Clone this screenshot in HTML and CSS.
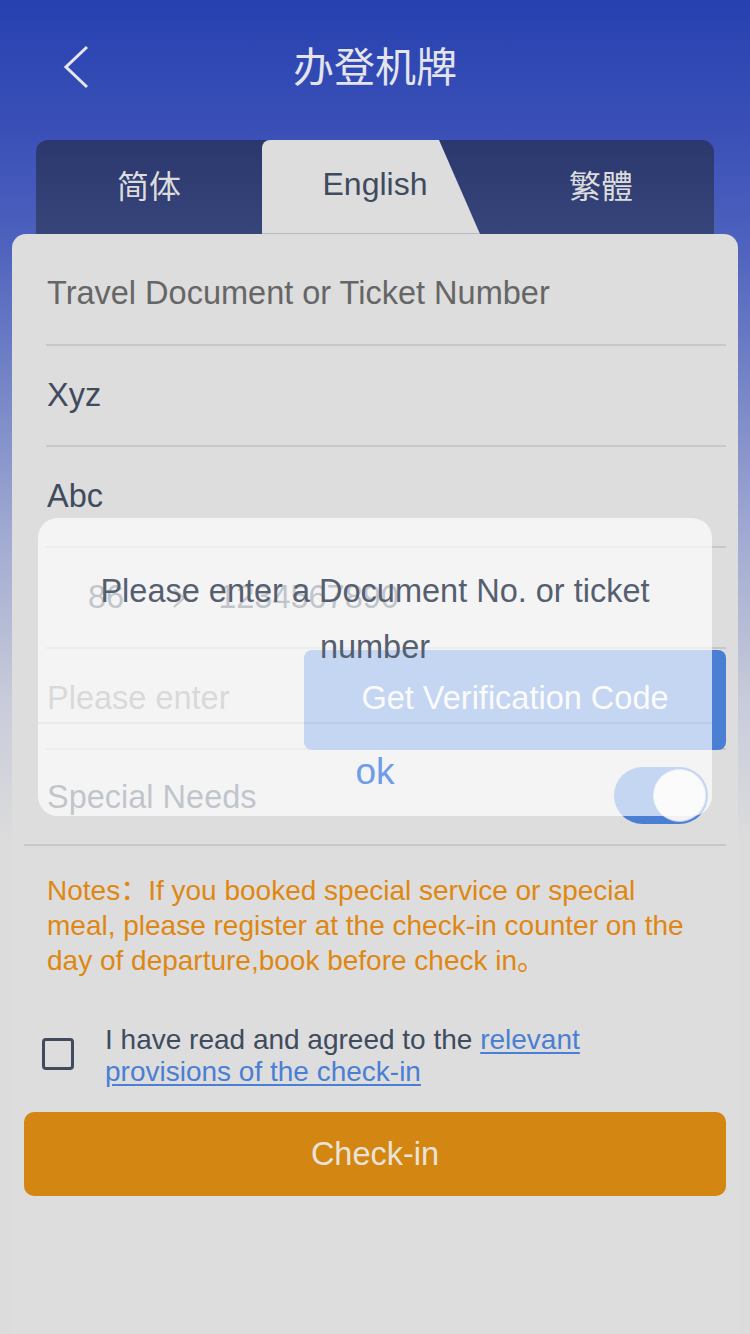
FILE: index.html
```html
<!DOCTYPE html>
<html lang="zh-CN">
<head>
<meta charset="utf-8">
<title>办登机牌</title>
<link rel="stylesheet" href="styles.css">
</head>
<body>
<div class="page">
  <header class="nav">
    <span class="back">
      <svg width="28" height="44" viewBox="0 0 28 44"><polyline points="23,2 2,22 23,42" fill="none" stroke="#e6e6ec" stroke-width="3"/></svg>
    </span>
    <h1 class="title">办登机牌</h1>
    <span></span>
  </header>

  <nav class="tabs">
    <div class="tab cjk">简体</div>
    <div class="tab active">English</div>
    <div class="tab cjk">繁體</div>
  </nav>

  <section class="card">
    <div class="row title-row">Travel Document or Ticket Number</div>
    <div class="row">Xyz</div>
    <div class="row">Abc</div>
    <div class="row phone">
      <span class="code">86</span>
      <svg class="arrow" width="14" height="22" viewBox="0 0 14 22"><polyline points="2,2 12,11 2,20" fill="none" stroke="#404b5d" stroke-width="2"/></svg>
      <span class="num">1234567890</span>
    </div>
    <div class="row verify">
      <span class="ph">Please enter</span>
      <button class="code-btn">Get Verification Code</button>
    </div>
    <div class="row special">
      <span class="label">Special Needs</span>
      <span class="toggle"><span class="knob"></span></span>
    </div>

    <p class="notes">Notes<span class="cjk glyph">：</span>If you booked special service or special meal, please register at the check-in counter on the day of departure,book before check in<span class="cjk glyph">。</span></p>

    <div class="agree">
      <span class="checkbox"></span>
      <p class="agree-text">I have read and agreed to the <a href="#" class="link">relevant provisions of the check-in</a></p>
    </div>

    <button class="checkin">Check-in</button>
  </section>

  <div class="dialog">
    <div class="dialog-msg">Please enter a Document No. or ticket number</div>
    <div class="dialog-ok">ok</div>
  </div>
</div>
</body>
</html>
```

FILE: styles.css
```css
* { box-sizing: border-box; }

html, body {
  margin: 0;
  padding: 0;
}

body {
  width: 750px;
  height: 1334px;
  overflow: hidden;
  font-family: "Liberation Sans", Arial, "Noto Sans CJK SC", sans-serif;
  background-color: #dcdcdc;
  background-image: linear-gradient(180deg, #2641b0 0px, #3a50b7 130px, #4d61bd 240px, #6e7fc5 360px, #a2abd2 540px, #c8cbda 700px, #dcdcdc 840px);
  background-repeat: no-repeat;
  background-size: 100% 840px;
}

.cjk { font-family: "Noto Sans CJK SC", sans-serif; }

.page {
  position: relative;
  height: 1334px;
}

.nav {
  height: 134px;
  padding-bottom: 6px;
  display: grid;
  grid-template-columns: 1fr auto 1fr;
  align-items: center;
}

.back {
  padding-left: 64px;
  padding-top: 6px;
  display: flex;
}

.title {
  margin: 0;
  font-family: "Noto Sans CJK SC", sans-serif;
  font-weight: 400;
  font-size: 41px;
  line-height: 1;
  color: #e4e4ea;
}

.tabs {
  margin: 6px 36px 0;
  height: 94px;
  display: flex;
  background: linear-gradient(180deg, #2b386d, #37457a);
  border-radius: 12px 12px 0 0;
}

.tab {
  flex: 1;
  display: flex;
  align-items: center;
  justify-content: center;
  font-size: 32px;
  color: #dcdcdc;
  padding-bottom: 6px;
}

.tab.active {
  background: #dddddd;
  color: #404b5d;
  padding-bottom: 4px;
  border-radius: 8px 0 0 0;
  border-bottom: 1px solid #b9b9c2;
  clip-path: polygon(0 0, 177px 0, 218px 100%, 0 100%);
}

.card {
  margin: 0 12px;
  background: #dddddd;
  border-radius: 14px 14px 0 0;
  min-height: 1100px;
}

.row {
  margin: 0 12px 0 34px;
  height: 101px;
  padding-left: 1px;
  border-bottom: 2px solid #c8c8c8;
  display: flex;
  align-items: center;
  font-size: 32.5px;
  color: #404b5d;
}

.title-row {
  height: 112px;
  padding-top: 8px;
  color: #666666;
}

.phone .code { margin-left: 41px; }
.phone .arrow { margin-left: 48px; }
.phone .num { margin-left: 32px; }

.verify .ph {
  flex: 1;
  color: #8a8a8a;
}

.code-btn {
  align-self: flex-end;
  margin-bottom: -2px;
  width: 422px;
  height: 100px;
  border: 0;
  border-radius: 8px;
  background: #4a7fd4;
  color: #f2f2f2;
  font-family: "Liberation Sans", Arial, sans-serif;
  font-size: 32.5px;
  padding: 0 0 4px;
}

.special {
  height: 96px;
  margin-left: 12px;
  padding-left: 23px;
  justify-content: space-between;
}

.toggle {
  width: 94px;
  height: 57px;
  margin-right: 18px;
  margin-bottom: 4px;
  border-radius: 29px;
  background: #4a7fd4;
  display: flex;
  align-items: center;
  justify-content: flex-end;
  padding: 2px;
}

.knob {
  width: 53px;
  height: 53px;
  border-radius: 50%;
  background: #f2f2f2;
  border: 1px solid #b9cdf0;
}

.notes {
  margin: 27px 50px 0 35px;
  font-size: 28px;
  line-height: 35px;
  color: #df8712;
}

.notes .glyph { line-height: 0; }

.agree {
  margin: 46px 0 0 30px;
  display: flex;
  align-items: center;
}

.checkbox {
  width: 32px;
  height: 32px;
  flex: none;
  margin-bottom: 4px;
  border: 3px solid #404b5d;
  border-radius: 4px;
}

.agree-text {
  margin: 0 0 0 31px;
  max-width: 540px;
  font-size: 28px;
  line-height: 32px;
  color: #404b5d;
}

.link {
  color: #4a7fd4;
  text-decoration: underline;
  text-underline-offset: 3px;
}

.checkin {
  display: block;
  margin: 24px 12px 0;
  width: 702px;
  height: 84px;
  border: 0;
  border-radius: 10px;
  background: #d48612;
  color: #e9e3d8;
  font-family: "Liberation Sans", Arial, sans-serif;
  font-size: 32.5px;
}

.dialog {
  position: absolute;
  left: 38px;
  top: 518px;
  width: 674px;
  height: 298px;
  border-radius: 20px;
  background: rgba(255, 255, 255, 0.68);
  display: flex;
  flex-direction: column;
}

.dialog-msg {
  height: 204px;
  display: flex;
  align-items: center;
  justify-content: center;
  text-align: center;
  padding: 0 30px 2px;
  font-size: 32.5px;
  line-height: 56px;
  color: #555f70;
}

.dialog-ok {
  flex: 1;
  border-top: 2px solid rgba(0, 0, 0, 0.04);
  display: flex;
  align-items: center;
  justify-content: center;
  font-size: 37px;
  color: #6e9de8;
  padding-top: 4px;
}
```
